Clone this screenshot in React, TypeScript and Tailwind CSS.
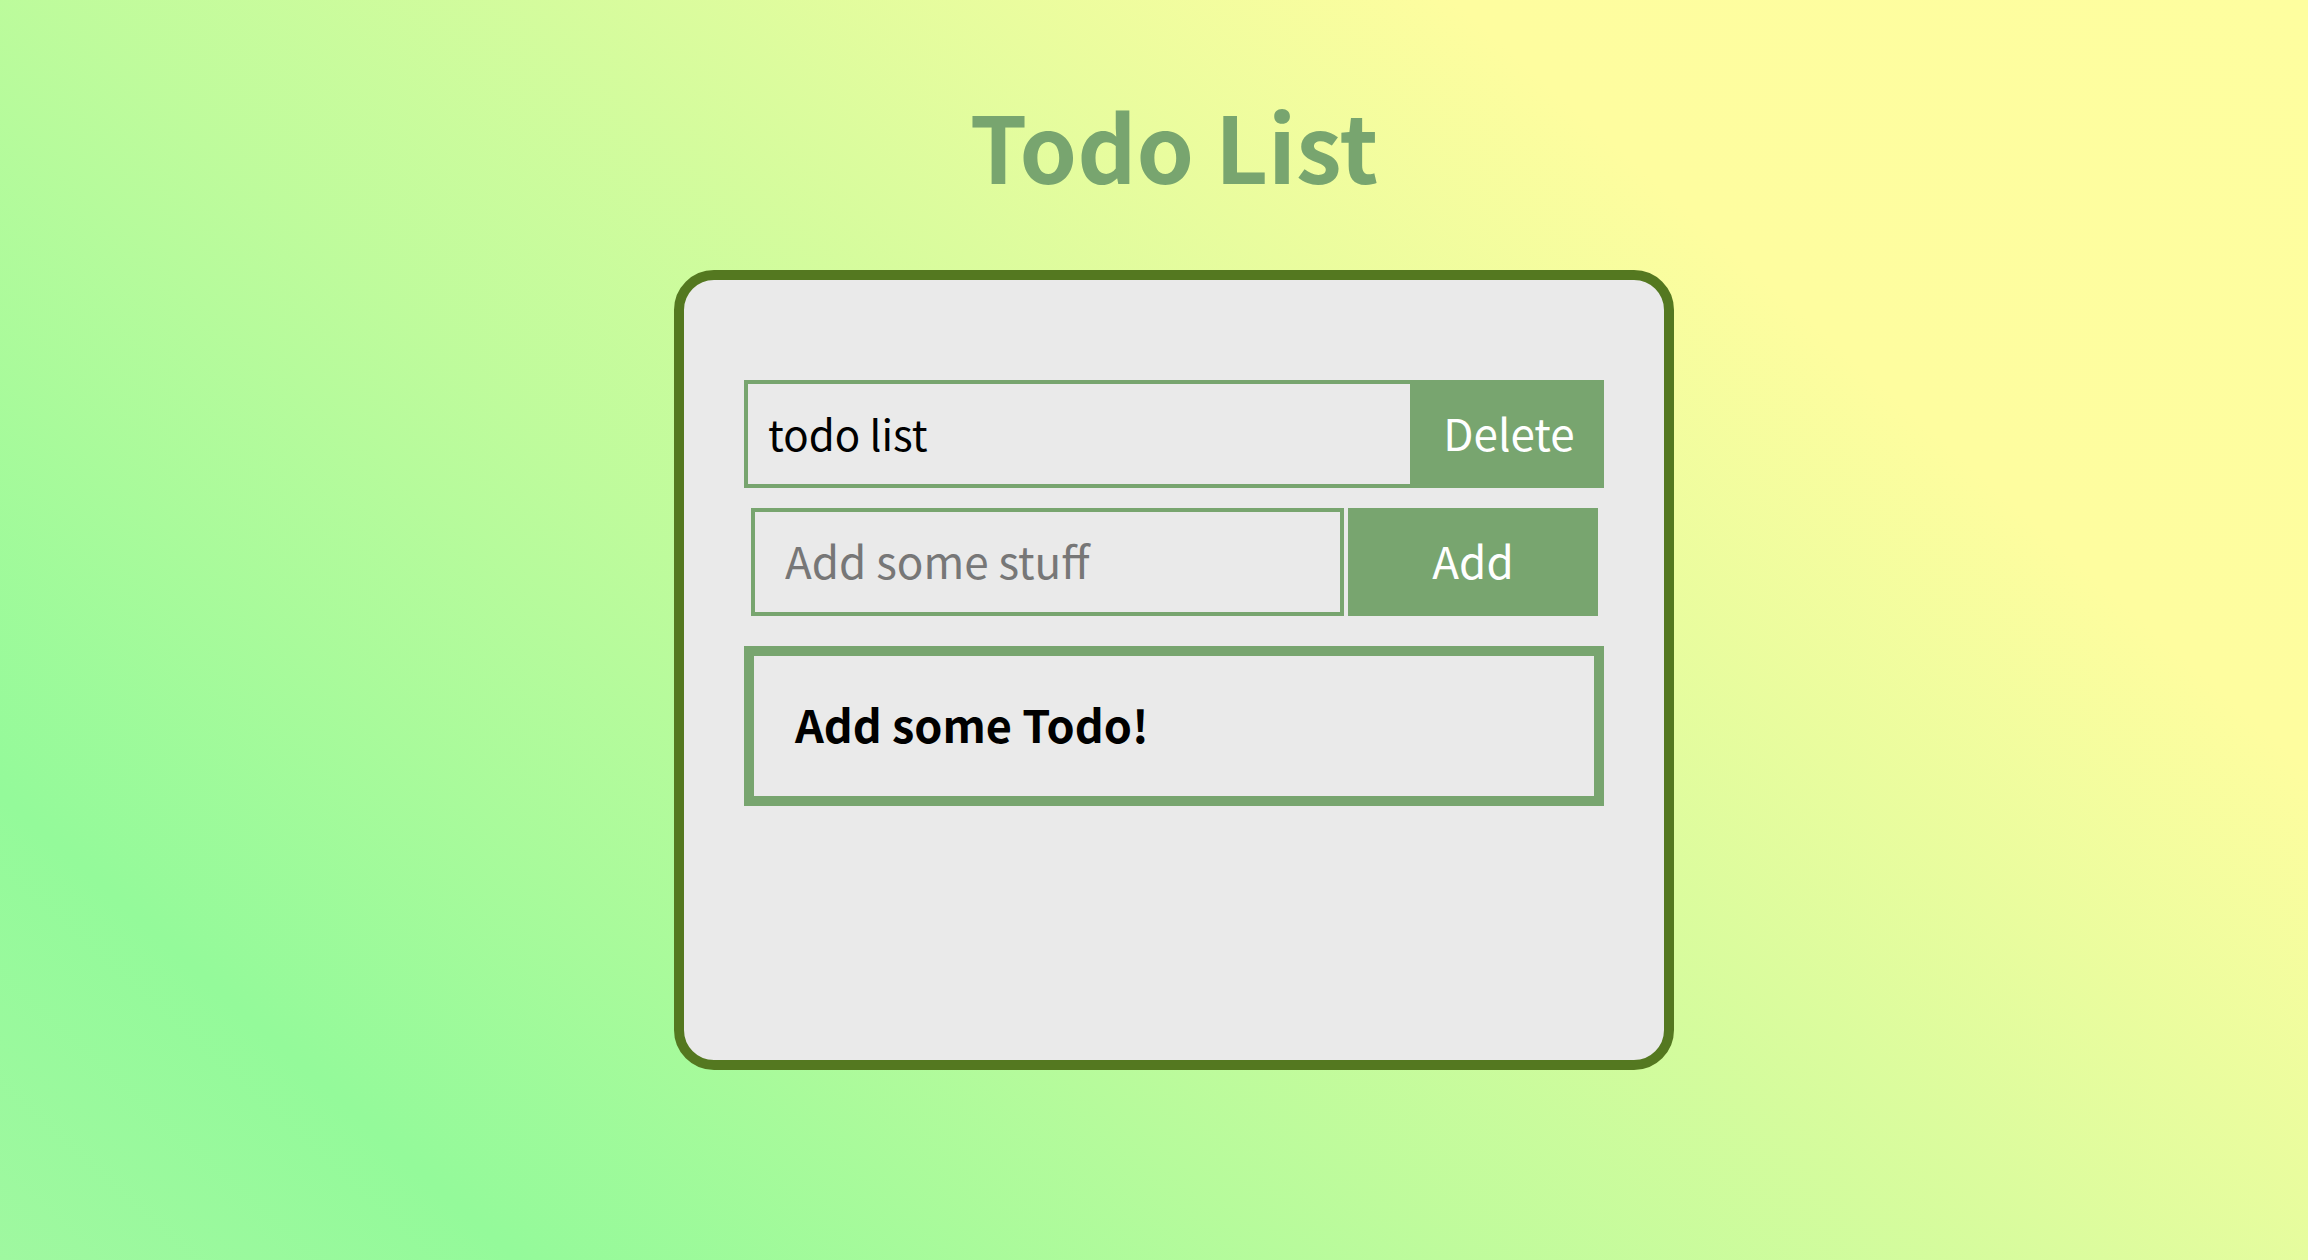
export default function App() {
  return (
    <div className="min-h-screen flex flex-col items-center pl-[40px] bg-[linear-gradient(42deg,#9ff8a0_0%,#94fa9a_14%,#fefd9f_77%,#fefe9f_100%)] font-['Noto_Sans_CJK_JP',sans-serif]">
      <h1 className="mt-[98px] text-[92px] font-bold leading-none text-[#78a56f]">
        Todo List
      </h1>

      <div className="mt-[80px] w-[1000px] h-[800px] border-[10px] border-[#547820] rounded-[40px] bg-[#eaeaea] pt-[100px] px-[60px]">
        {/* current list */}
        <div className="flex h-[108px]">
          <input
            defaultValue="todo list"
            className="w-[670px] shrink-0 h-full border-4 border-[#78a56f] bg-transparent px-[20px] pb-[4px] text-[42px] text-black outline-none"
          />
          <button className="flex-1 bg-[#78a56f] text-white text-[44px] pb-[4px]">
            Delete
          </button>
        </div>

        {/* add form */}
        <div className="flex gap-[4px] h-[108px] mt-[20px] ml-[7px] mr-[6px]">
          <input
            placeholder="Add some stuff"
            className="w-[593px] shrink-0 h-full border-4 border-[#78a56f] bg-transparent px-[30px] pb-[4px] text-[44px] text-black placeholder:text-[#777777] outline-none"
          />
          <button className="flex-1 bg-[#78a56f] text-white text-[44px] pb-[4px]">
            Add
          </button>
        </div>

        <div className="mt-[30px] h-[160px] border-[10px] border-[#78a56f] flex items-center pl-[41px] pb-[4px]">
          <span className="text-[45px] font-bold text-black">Add some Todo!</span>
        </div>
      </div>
    </div>
  );
}
